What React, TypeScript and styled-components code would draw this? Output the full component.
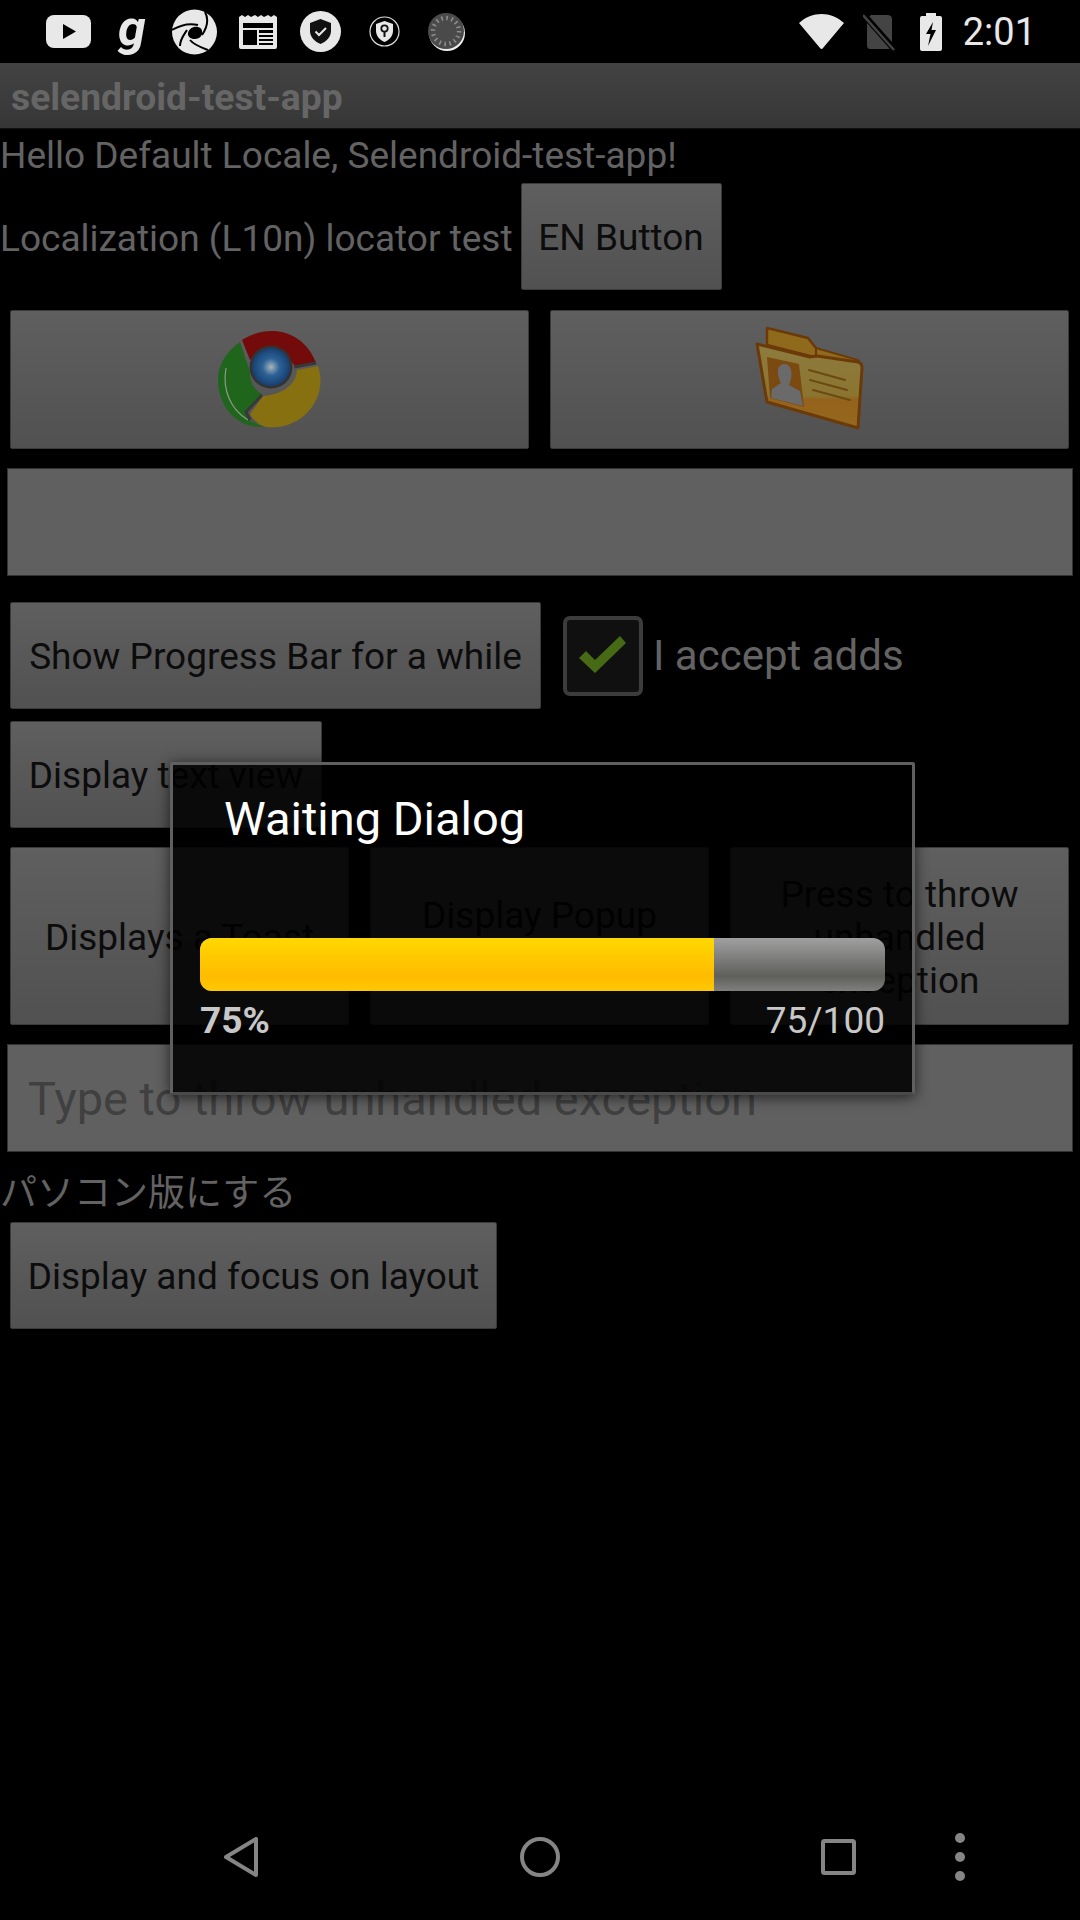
import styled, {createGlobalStyle} from "styled-components";

const GlobalStyle = createGlobalStyle`
  html, body {
    margin: 0;
    padding: 0;
    background: #000;
  }
  body {
    font-family: Roboto, "Noto Sans CJK JP", sans-serif;
  }
  * {
    box-sizing: border-box;
  }
`

const Page = styled.div`
  position: relative;
  width: 1080px;
  height: 1920px;
  background: #000;
  overflow: hidden;
  display: flex;
  flex-direction: column;
`

/* status bar */
const StatusBar = styled.div`
  height: 63px;
  padding-left: 46px;
  display: flex;
  align-items: center;
  flex-shrink: 0;
`
const StatusIcon = styled.svg<{$gap?: number}>`
  display: block;
  flex-shrink: 0;
  margin-left: ${p => p.$gap ?? 0}px;
`
const LogoLetter = styled.span`
  width: 30px;
  margin-left: 27px;
  font-size: 50px;
  line-height: 56px;
  font-weight: 700;
  font-style: italic;
  color: #e8e8e8;
  margin-bottom: 8px;
`
const StatusRight = styled.div`
  margin-left: auto;
  padding-right: 44px;
  display: flex;
  align-items: center;
`
const Clock = styled.span`
  margin-left: 21px;
  font-size: 38px;
  color: #e8e8e8;
`

/* app content */
const ActionBar = styled.div`
  height: 66px;
  padding: 2px 0 0 11px;
  display: flex;
  align-items: center;
  background: linear-gradient(#434343, #363636);
  border-bottom: 1px solid #111;
  font-size: 37.25px;
  font-weight: 700;
  color: #666;
  flex-shrink: 0;
`
const Greeting = styled.div`
  height: 54px;
  line-height: 54px;
  font-size: 37px;
  color: #636363;
  white-space: nowrap;
`
const LocaleRow = styled.div`
  display: flex;
  align-items: center;
`
const PlainLabel = styled.span`
  padding-top: 3px;
  font-size: 37px;
  color: #636363;
  white-space: nowrap;
`
const Button = styled.div<{$width?: number; $lift?: boolean}>`
  height: 107px;
  width: ${p => (p.$width ? `${p.$width}px` : "auto")};
  padding: 2px 15px ${p => (p.$lift ? "44px" : "0")};
  display: flex;
  align-items: center;
  justify-content: center;
  flex-shrink: 0;
  background: linear-gradient(#5f5f5f, #515151);
  border: 1px solid #3a3a3a;
  border-radius: 2px;
  font-size: 37px;
  line-height: 43px;
  color: #0c0c0c;
  text-align: center;
  white-space: nowrap;
`
const EnButton = styled(Button)`
  margin-left: 8px;
`
const ImageRow = styled.div`
  margin-top: 20px;
  padding: 0 11px 0 10px;
  display: flex;
  gap: 21px;
`
const ImageButton = styled(Button)`
  flex: 1;
  height: 139px;
  padding: 0;
`
const TextField = styled.div<{$top: number}>`
  margin: ${p => p.$top}px 7px 0;
  height: 108px;
  padding-left: 20px;
  display: flex;
  align-items: center;
  background: #606060;
  border: 1px solid #333;
  font-size: 47px;
  color: #404040;
  white-space: nowrap;
`
const ProgressRow = styled.div`
  margin-top: 26px;
  padding-left: 10px;
  display: flex;
  align-items: center;
`
const CheckBox = styled.div`
  margin-left: 22px;
  width: 80px;
  height: 80px;
  display: flex;
  align-items: center;
  justify-content: center;
  background: #101010;
  border: 4px solid #3c3c3c;
  border-radius: 7px;
`
const CheckLabel = styled.span`
  margin-left: 10px;
  font-size: 42px;
  color: #636363;
  white-space: nowrap;
`
const TextViewButton = styled(Button)`
  margin: 12px 0 0 10px;
  align-self: flex-start;
`
const TripleRow = styled.div`
  margin-top: 19px;
  padding: 0 11px 0 10px;
  display: flex;
  gap: 21px;
`
const TripleButton = styled(Button)`
  flex: 1;
  height: 178px;
  white-space: normal;
`
const JapaneseLink = styled.div`
  height: 70px;
  padding-top: 21px;
  font-size: 37px;
  line-height: 42px;
  color: #636363;
`
const FocusButton = styled(Button)`
  margin-left: 10px;
  align-self: flex-start;
`

/* waiting dialog */
const Dialog = styled.div`
  position: absolute;
  left: 170px;
  top: 762px;
  width: 745px;
  height: 333px;
  padding: 0 27px;
  background: rgba(0, 0, 0, 0.88);
  border: 3px solid #5f5f5f;
  border-bottom-color: #4a4a4a;
  border-radius: 3px;
  box-shadow: 0 2px 14px rgba(0, 0, 0, 0.65);
`
const DialogTitle = styled.div`
  height: 106px;
  padding: 24px 0 0 24px;
  font-size: 47px;
  line-height: 60px;
  color: #fff;
`
const Track = styled.div`
  margin-top: 67px;
  height: 53px;
  border-radius: 12px;
  overflow: hidden;
  background: linear-gradient(#a0a0a0, #5f605c 72%, #7f807e);
`
const Fill = styled.div`
  height: 100%;
  background: linear-gradient(#ffd800, #ffbb00 72%, #ffc800);
`
const Counts = styled.div`
  margin-top: 9px;
  display: flex;
  justify-content: space-between;
  font-size: 37px;
  line-height: 42px;
  color: #c8c8c8;
`
const Percent = styled.span`
  font-weight: 700;
`

/* navigation bar */
const NavBar = styled.div`
  position: absolute;
  left: 0;
  right: 0;
  bottom: 0;
  height: 126px;
  padding-left: 224px;
  display: flex;
  align-items: center;
`
const NavIcon = styled.svg<{$gap?: number}>`
  display: block;
  margin-left: ${p => p.$gap ?? 0}px;
`

function ChromeLogo() {
    return (
        <svg width="140" height="120" viewBox="0 0 140 120">
            <defs>
                <radialGradient id="chromeCenter">
                    <stop offset="0" stopColor="#a9b4bb"/>
                    <stop offset="0.45" stopColor="#2d6296"/>
                    <stop offset="1" stopColor="#173f70"/>
                </radialGradient>
            </defs>
            <path d="M42 20 C68 3 104 10 116 43 L96 48 C86 30 62 27 50 40 Z" fill="#730b0b"/>
            <path d="M97 50 L118 46 C129 78 102 111 66 107 C60 106 54 101 50 94 L63 76 C80 75 96 66 97 50 Z" fill="#86700f"/>
            <path d="M40 22 L50 52 C50 62 54 70 62 74 L45 91 L50 101 L64 107 C35 108 18 85 18 60 C18 44 27 31 40 22 Z" fill="#1f651c"/>
            <path d="M26 48 C22 70 31 90 48 100" fill="none" stroke="#8a9a88" strokeWidth="1.2"/>
            <path d="M62 75 L46 92 L50 100" fill="none" stroke="#383838" strokeWidth="3"/>
            <path d="M94 47 L116 43" stroke="#383838" strokeWidth="3"/>
            <circle cx="71" cy="47" r="21.5" fill="#333"/>
            <circle cx="71" cy="47" r="19" fill="url(#chromeCenter)"/>
        </svg>
    )
}

function ContactsFolder() {
    return (
        <svg width="140" height="120" viewBox="0 5 140 120">
            <defs>
                <linearGradient id="folderFront" x1="0" y1="0" x2="0" y2="1">
                    <stop offset="0" stopColor="#8d7c3f"/>
                    <stop offset="0.62" stopColor="#8b7430"/>
                    <stop offset="0.66" stopColor="#95621c"/>
                    <stop offset="1" stopColor="#94681f"/>
                </linearGradient>
            </defs>
            <path d="M27 13 L68 23 L79 37 L74 42 L27 30 Z" fill="#8f6a1c" stroke="#6b3a08" strokeWidth="2.5" strokeLinejoin="round"/>
            <path d="M76 33 L118 45 L122 50 L120 60 L76 45 Z" fill="#8f6a1c" stroke="#6b3a08" strokeWidth="2"/>
            <path d="M17 29 L70 42 L77 41 L118 47 Q122 48 122 53 L118 113 L27 87 Z" fill="url(#folderFront)" stroke="#6b3a08" strokeWidth="3" strokeLinejoin="round"/>
            <path d="M27 42 L59 49 L64 92 L30 83 Z" fill="#7a4a10"/>
            <path d="M32 74 L41 68 C37 60 36 50 44 49 C53 49 53 62 49 70 L60 76 L63 91 L31 83 Z" fill="#6a6a6a"/>
            <path d="M69 55 L105 65 M70 65 L107 75 M73 75 L110 85" stroke="#6b4a14" strokeWidth="2" strokeLinecap="round"/>
        </svg>
    )
}

export default function App() {
    const progress = 75;
    const total = 100;

    return (
        <Page>
            <GlobalStyle/>
            <StatusBar>
                <StatusIcon width="45" height="33" viewBox="0 0 45 33">
                    <rect width="45" height="33" rx="8" fill="#e8e8e8"/>
                    <path d="M17 9 L30 16.5 L17 24 Z" fill="#000"/>
                </StatusIcon>
                <LogoLetter>g</LogoLetter>
                <StatusIcon $gap={24} width="45" height="46" viewBox="0 0 45 46">
                    <circle cx="22.5" cy="23" r="22.5" fill="#e8e8e8"/>
                    <path d="M0 21 C10 15 18 14 26 16 M33 3 C38 12 34 20 30 26 M36 41 C28 38 22 36 18 31 M8 37 C8 30 12 26 15 21" fill="none" stroke="#000" strokeWidth="2"/>
                    <path d="M26 18 C32 19 31 27 27 29 C21 32 15 28 16 24 C17 20 21 17 26 18 Z" fill="#000"/>
                </StatusIcon>
                <StatusIcon $gap={22} width="38" height="34" viewBox="0 0 38 34">
                    <path d="M0 2 L3 0 L6 2 L9 0 L12 2 L16 0 L19 2 L22 0 L25 2 L29 0 L32 2 L35 0 L38 2 V32 Q38 34 36 34 H2 Q0 34 0 32 Z" fill="#e8e8e8"/>
                    <rect x="4" y="8" width="30" height="22" fill="#000"/>
                    <rect x="4" y="13" width="30" height="2" fill="#e8e8e8"/>
                    <rect x="18" y="13" width="2" height="17" fill="#e8e8e8"/>
                    <path d="M20 19 H34 M20 23 H34 M20 27 H34" stroke="#e8e8e8" strokeWidth="2"/>
                </StatusIcon>
                <StatusIcon $gap={23} width="41" height="41" viewBox="0 0 41 41">
                    <circle cx="20.5" cy="20.5" r="20.5" fill="#e8e8e8"/>
                    <path d="M20.5 8 L31 12 V20 C31 26 26 31 20.5 33 C15 31 10 26 10 20 V12 Z" fill="#111"/>
                    <path d="M15.5 20.5 L19 24 L26 17" fill="none" stroke="#e8e8e8" strokeWidth="2"/>
                </StatusIcon>
                <StatusIcon $gap={28} width="31" height="31" viewBox="0 0 31 31">
                    <circle cx="15.5" cy="15.5" r="14.5" fill="#000" stroke="#ddd" strokeWidth="1.2"/>
                    <path d="M15.5 5 L24 8 V15 C24 20 20 24 15.5 26 C11 24 7 20 7 15 V8 Z" fill="#e8e8e8"/>
                    <circle cx="15.5" cy="12.5" r="3.2" fill="none" stroke="#111" strokeWidth="1.8"/>
                    <path d="M15.5 15.5 V21" stroke="#111" strokeWidth="2"/>
                </StatusIcon>
                <StatusIcon $gap={28} width="38" height="38" viewBox="0 0 38 38">
                    <circle cx="19" cy="20" r="18" fill="#eee"/>
                    <circle cx="18" cy="18" r="18" fill="#4a4a4a"/>
                    <circle cx="18" cy="18" r="13" fill="none" stroke="#8c8c8c" strokeWidth="4.5" strokeDasharray="1.6 3.5"/>
                </StatusIcon>
                <StatusRight>
                    <StatusIcon width="45" height="36" viewBox="0 0 45 36">
                        <path d="M0 9 C13 -3 32 -3 45 9 L24 34 Q22.5 36 21 34 Z" fill="#e8e8e8"/>
                    </StatusIcon>
                    <StatusIcon $gap={19} width="32" height="38" viewBox="0 0 32 38">
                        <path d="M8 2 H24 Q29 2 29 6 V32 Q29 36 25 36 H7 Q4 36 4 32 V6 Z" fill="#444"/>
                        <path d="M1 2 L31 36" stroke="#000" strokeWidth="6"/>
                        <path d="M0 2 L31 37" stroke="#444" strokeWidth="2.5"/>
                    </StatusIcon>
                    <StatusIcon $gap={25} width="22" height="38" viewBox="0 0 22 38">
                        <path d="M6 0 H16 V3 H20 Q22 3 22 5 V36 Q22 38 20 38 H2 Q0 38 0 36 V5 Q0 3 2 3 H6 Z" fill="#e8e8e8"/>
                        <path d="M13 9 L6 21 H10.5 L8 33 L16 17 H11.5 Z" fill="#000"/>
                    </StatusIcon>
                    <Clock>2:01</Clock>
                </StatusRight>
            </StatusBar>

            <ActionBar>selendroid-test-app</ActionBar>
            <Greeting>Hello Default Locale, Selendroid-test-app!</Greeting>
            <LocaleRow>
                <PlainLabel>Localization (L10n) locator test</PlainLabel>
                <EnButton $width={201}>EN Button</EnButton>
            </LocaleRow>
            <ImageRow>
                <ImageButton><ChromeLogo/></ImageButton>
                <ImageButton><ContactsFolder/></ImageButton>
            </ImageRow>
            <TextField $top={19}/>
            <ProgressRow>
                <Button $width={531}>Show Progress Bar for a while</Button>
                <CheckBox>
                    <svg width="48" height="40" viewBox="0 0 48 40">
                        <path d="M0 22 L7 15 L16 24 L41 0 L47 7 L16 37 Z" fill="#476a14"/>
                    </svg>
                </CheckBox>
                <CheckLabel>I accept adds</CheckLabel>
            </ProgressRow>
            <TextViewButton $width={312}>Display text view</TextViewButton>
            <TripleRow>
                <TripleButton>Displays a Toast</TripleButton>
                <TripleButton $lift>Display Popup</TripleButton>
                <TripleButton>Press to throw unhandled exception</TripleButton>
            </TripleRow>
            <TextField $top={19}>Type to throw unhandled exception</TextField>
            <JapaneseLink>パソコン版にする</JapaneseLink>
            <FocusButton $width={487}>Display and focus on layout</FocusButton>

            <Dialog>
                <DialogTitle>Waiting Dialog</DialogTitle>
                <Track>
                    <Fill style={{width: `${(progress / total) * 100}%`}}/>
                </Track>
                <Counts>
                    <Percent>{progress}%</Percent>
                    <span>{progress}/{total}</span>
                </Counts>
            </Dialog>

            <NavBar>
                <NavIcon width="34" height="40" viewBox="0 0 34 40">
                    <path d="M32 2 V38 L2 20 Z" fill="none" stroke="#858585" strokeWidth="4" strokeLinejoin="round"/>
                </NavIcon>
                <NavIcon $gap={262} width="40" height="40" viewBox="0 0 40 40">
                    <circle cx="20" cy="20" r="18" fill="none" stroke="#858585" strokeWidth="4"/>
                </NavIcon>
                <NavIcon $gap={261} width="35" height="36" viewBox="0 0 35 36">
                    <rect x="2" y="2" width="31" height="32" rx="1.5" fill="none" stroke="#858585" strokeWidth="4"/>
                </NavIcon>
                <NavIcon $gap={99} width="10" height="48" viewBox="0 0 10 48">
                    <circle cx="5" cy="5" r="5" fill="#858585"/>
                    <circle cx="5" cy="24" r="5" fill="#858585"/>
                    <circle cx="5" cy="43" r="5" fill="#858585"/>
                </NavIcon>
            </NavBar>
        </Page>
    )
}
